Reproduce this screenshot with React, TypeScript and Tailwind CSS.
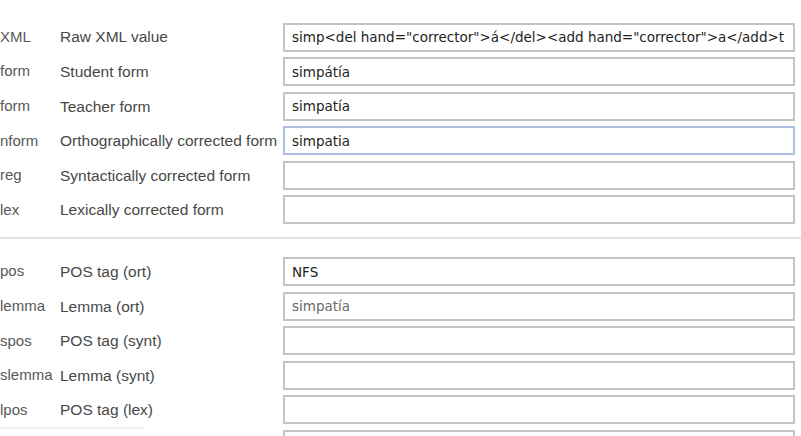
const fields = [
  { key: "XML", label: "Raw XML value", value: 'simp<del hand="corrector">á</del><add hand="corrector">a</add>t' },
  { key: "form", label: "Student form", value: "simpátía" },
  { key: "form", label: "Teacher form", value: "simpatía" },
  { key: "nform", label: "Orthographically corrected form", value: "simpatia", focused: true },
  { key: "reg", label: "Syntactically corrected form", value: "" },
  { key: "lex", label: "Lexically corrected form", value: "" },
];

const tags = [
  { key: "pos", label: "POS tag (ort)", value: "NFS" },
  { key: "lemma", label: "Lemma (ort)", value: "simpatía", muted: true },
  { key: "spos", label: "POS tag (synt)", value: "" },
  { key: "slemma", label: "Lemma (synt)", value: "" },
  { key: "lpos", label: "POS tag (lex)", value: "" },
];

type Field = { key: string; label: string; value: string; focused?: boolean; muted?: boolean };

function FieldInput({ value, focused, muted }: { value: string; focused?: boolean; muted?: boolean }) {
  return (
    <input
      readOnly
      value={value}
      className={`w-[512px] h-[29px] border-2 bg-white px-[7px] text-[13.5px] font-['DejaVu_Sans',sans-serif] outline-none ${
        focused ? "border-[#abc0e4]" : "border-[#c4c4c4]"
      } ${muted ? "text-[#6a6a6a]" : "text-[#1e1e1e]"}`}
    />
  );
}

function FieldRow({ field }: { field: Field }) {
  return (
    <div className="grid grid-cols-[60px_223px_512px] h-[34.6px] items-start">
      <span className="h-[29px] flex items-center text-[15px] text-[#585858] whitespace-nowrap overflow-hidden">{field.key}</span>
      <span className="h-[29px] flex items-center text-[15.5px] text-[#484848] whitespace-nowrap">{field.label}</span>
      <FieldInput value={field.value} focused={field.focused} muted={field.muted} />
    </div>
  );
}

export default function App() {
  return (
    <div className="w-[801px] h-[436px] overflow-hidden bg-white pt-[22.5px] font-['Liberation_Sans',Arial,sans-serif]">
      {fields.map((f, i) => (
        <FieldRow key={i} field={f} />
      ))}

      <div className="mt-[7px] mb-[18px] h-[2px] bg-[#e3e3e3]" />

      {tags.map((f, i) => (
        <FieldRow key={i} field={f} />
      ))}

      {/* next row, cut off by the panel edge */}
      <div className="flex">
        <div className="w-[283px]">
          <div className="w-[143px] h-[2px] -mt-[3px] bg-[#eeeeee]" />
        </div>
        <FieldInput value="" />
      </div>
    </div>
  );
}
